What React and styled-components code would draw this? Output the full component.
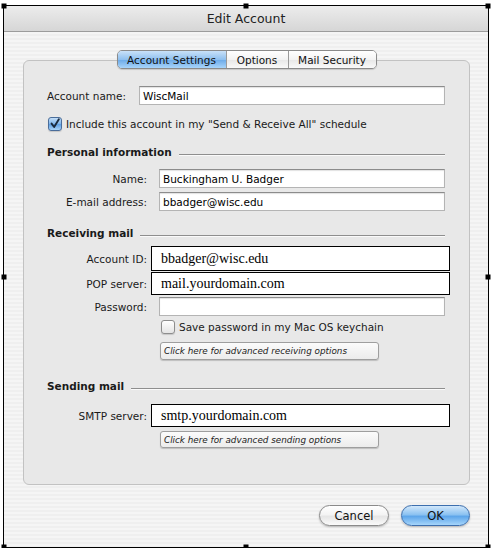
import React from "react";
import styled, { createGlobalStyle } from "styled-components";

const Global = createGlobalStyle`
  html, body { margin: 0; padding: 0; background: #fff; }
  body { font-family: "DejaVu Sans", "Liberation Sans", sans-serif; font-size: 10.5px; color: #000; }
`;

const Window = styled.div`
  position: relative;
  box-sizing: border-box;
  margin: 5px 0 0 3px;
  width: 486px;
  height: 543px;
  border: 1px solid #000;
  background: repeating-linear-gradient(to bottom, #efefef 0 2px, #f5f5f5 2px 4px);
  display: flex;
  flex-direction: column;
`;

const Handle = styled.span`
  position: absolute;
  width: 5px;
  height: 5px;
  background: #000;
  left: ${({ $x }) => $x};
  top: ${({ $y }) => $y};
  transform: translate(-50%, -50%);
`;

const TitleBar = styled.div`
  height: 25px;
  flex: none;
  display: flex;
  align-items: center;
  justify-content: center;
  font-size: 12.5px;
  color: #222;
  background: linear-gradient(to bottom, #ececec, #d6d6d6);
  border-bottom: 1px solid #9c9c9c;
`;

const Body = styled.div`
  padding: 28px 18px 0 19px;
  display: flex;
  flex-direction: column;
`;

const GroupBox = styled.div`
  position: relative;
  box-sizing: border-box;
  height: 425px;
  border: 1px solid #c2c2c2;
  border-radius: 6px;
  background: #e8e8e8;
  padding: 0 24px 0 23px;
  display: flex;
  flex-direction: column;
`;

const Tabs = styled.div`
  position: absolute;
  top: -11px;
  left: 50%;
  transform: translateX(-50%);
  display: flex;
  height: 17px;
  border: 1px solid #8a8a8a;
  border-radius: 5px;
  overflow: hidden;
  box-shadow: 0 1px 1px rgba(0, 0, 0, 0.15);
`;

const Tab = styled.div`
  width: ${({ $w }) => $w}px;
  display: flex;
  align-items: center;
  justify-content: center;
  color: #111;
  border-left: ${({ $first }) => ($first ? "none" : "1px solid #9a9a9a")};
  background: ${({ $active }) =>
    $active
      ? "linear-gradient(to bottom, #c9e1f8 0%, #8fc0ef 50%, #6aa9e8 51%, #a8d4fa 100%)"
      : "linear-gradient(to bottom, #ffffff 0%, #f3f3f3 50%, #e7e7e7 51%, #f9f9f9 100%)"};
`;

const Row = styled.div`
  display: flex;
  align-items: center;
  height: ${({ $h }) => $h}px;
  margin-top: ${({ $mt }) => $mt}px;
`;

const Label = styled.div`
  width: ${({ $w }) => $w || 100}px;
  flex: none;
  text-align: ${({ $left }) => ($left ? "left" : "right")};
  padding-right: 12px;
  color: #1a1a1a;
  white-space: nowrap;
`;

const Field = styled.div`
  flex: 1;
  box-sizing: border-box;
  height: 100%;
  background: #fff;
  display: flex;
  align-items: center;
  white-space: nowrap;
  ${({ $strong }) =>
    $strong
      ? `
    margin: 0 -5px 0 -8px;
    border: 1.5px solid #000;
    padding-left: 9px;
    font-family: "Liberation Serif", "Times New Roman", serif;
    font-size: 14px;
  `
      : `
    border: 1px solid #b4b4b4;
    border-top-color: #8c8c8c;
    box-shadow: inset 0 1px 1px rgba(0,0,0,0.12);
    padding-left: 3px;
    font-size: 10.5px;
  `}
`;

const CheckRow = styled.label`
  display: flex;
  align-items: center;
  gap: 4px;
  height: ${({ $h }) => $h}px;
  margin-top: ${({ $mt }) => $mt}px;
  margin-left: ${({ $ml }) => $ml}px;
  color: #1a1a1a;
  white-space: nowrap;
`;

const Box = styled.span`
  width: 14px;
  height: 14px;
  box-sizing: border-box;
  border-radius: 3px;
  border: 1px solid ${({ $on }) => ($on ? "#4a6d9a" : "#8d8d8d")};
  background: ${({ $on }) =>
    $on
      ? "linear-gradient(to bottom, #c3def8 0%, #7fb4ea 50%, #5c9ee3 51%, #a9d2f7 100%)"
      : "linear-gradient(to bottom, #ffffff, #e4e4e4)"};
  display: flex;
  align-items: center;
  justify-content: center;
  box-shadow: 0 1px 1px rgba(0, 0, 0, 0.15);
`;

const Heading = styled.div`
  display: flex;
  align-items: center;
  gap: 7px;
  height: 14px;
  margin-top: ${({ $mt }) => $mt}px;
  font-weight: bold;
  color: #1a1a1a;
  &::after {
    content: "";
    flex: 1;
    height: 1px;
    margin-top: 5px;
    background: #8e8e8e;
    box-shadow: 0 1px 0 #fafafa;
  }
`;

const AdvButton = styled.div`
  box-sizing: border-box;
  width: 219px;
  height: ${({ $h }) => $h}px;
  margin-top: ${({ $mt }) => $mt}px;
  margin-left: 113px;
  border: 1px solid #9e9e9e;
  border-radius: 3px;
  background: linear-gradient(to bottom, #fbfbfb, #ececec);
  box-shadow: 0 1px 1px rgba(0, 0, 0, 0.18);
  display: flex;
  align-items: center;
  padding-left: 3px;
  font-style: italic;
  font-size: 8.8px;
  color: #222;
`;

const Footer = styled.div`
  display: flex;
  justify-content: flex-end;
  gap: 12px;
  margin-top: 20px;
`;

const Pill = styled.div`
  box-sizing: border-box;
  width: ${({ $w }) => $w}px;
  height: 21px;
  border-radius: 11px;
  display: flex;
  align-items: center;
  justify-content: center;
  font-size: 11.5px;
  color: #111;
  border: 1px solid ${({ $primary }) => ($primary ? "#3d6fae" : "#8a8a8a")};
  background: ${({ $primary }) =>
    $primary
      ? "linear-gradient(to bottom, #d2e8fb 0%, #8cc2f1 45%, #5ea6ea 55%, #a6d5fb 100%)"
      : "linear-gradient(to bottom, #ffffff 0%, #f4f4f4 45%, #e6e6e6 55%, #fafafa 100%)"};
  box-shadow: 0 1px 2px rgba(0, 0, 0, 0.25);
`;

const Check = () => (
  <svg width="14" height="14" viewBox="0 0 14 14">
    <path d="M3 6.5 L6 10.5 L11.5 1.5" fill="none" stroke="#1b2a3d" strokeWidth="2.2" strokeLinecap="round" strokeLinejoin="round" />
  </svg>
);

export default function App() {
  return (
    <>
      <Global />
      <Window>
        <Handle $x="0" $y="0" />
        <Handle $x="50%" $y="0" />
        <Handle $x="100%" $y="0" />
        <Handle $x="0" $y="50%" />
        <Handle $x="100%" $y="50%" />
        <Handle $x="0" $y="100%" />
        <Handle $x="50%" $y="100%" />
        <Handle $x="100%" $y="100%" />
        <TitleBar>Edit Account</TitleBar>
        <Body>
          <GroupBox>
            <Tabs>
              <Tab $w={108} $first $active>Account Settings</Tab>
              <Tab $w={61}>Options</Tab>
              <Tab $w={87}>Mail Security</Tab>
            </Tabs>

            <Row $h={19} $mt={25}>
              <Label $w={80} $left>Account name:</Label>
              <Field>WiscMail</Field>
            </Row>
            <CheckRow $h={16} $mt={11} $ml={1}>
              <Box $on><Check /></Box>
              Include this account in my "Send &amp; Receive All" schedule
            </CheckRow>

            <Heading $mt={13}>Personal information</Heading>
            <Row $h={19} $mt={10}>
              <Label>Name:</Label>
              <Field>Buckingham U. Badger</Field>
            </Row>
            <Row $h={19} $mt={4}>
              <Label>E-mail address:</Label>
              <Field>bbadger@wisc.edu</Field>
            </Row>

            <Heading $mt={15}>Receiving mail</Heading>
            <Row $h={25} $mt={6}>
              <Label>Account ID:</Label>
              <Field $strong>bbadger@wisc.edu</Field>
            </Row>
            <Row $h={23} $mt={1}>
              <Label>POP server:</Label>
              <Field $strong>mail.yourdomain.com</Field>
            </Row>
            <Row $h={19} $mt={2}>
              <Label>Password:</Label>
              <Field />
            </Row>
            <CheckRow $h={15} $mt={3} $ml={114}>
              <Box />
              Save password in my Mac OS keychain
            </CheckRow>
            <AdvButton $h={18} $mt={8}>Click here for advanced receiving options</AdvButton>

            <Heading $mt={19}>Sending mail</Heading>
            <Row $h={23} $mt={11}>
              <Label>SMTP server:</Label>
              <Field $strong>smtp.yourdomain.com</Field>
            </Row>
            <AdvButton $h={17} $mt={4}>Click here for advanced sending options</AdvButton>
          </GroupBox>
          <Footer>
            <Pill $w={70}>Cancel</Pill>
            <Pill $w={69} $primary>OK</Pill>
          </Footer>
        </Body>
      </Window>
    </>
  );
}
